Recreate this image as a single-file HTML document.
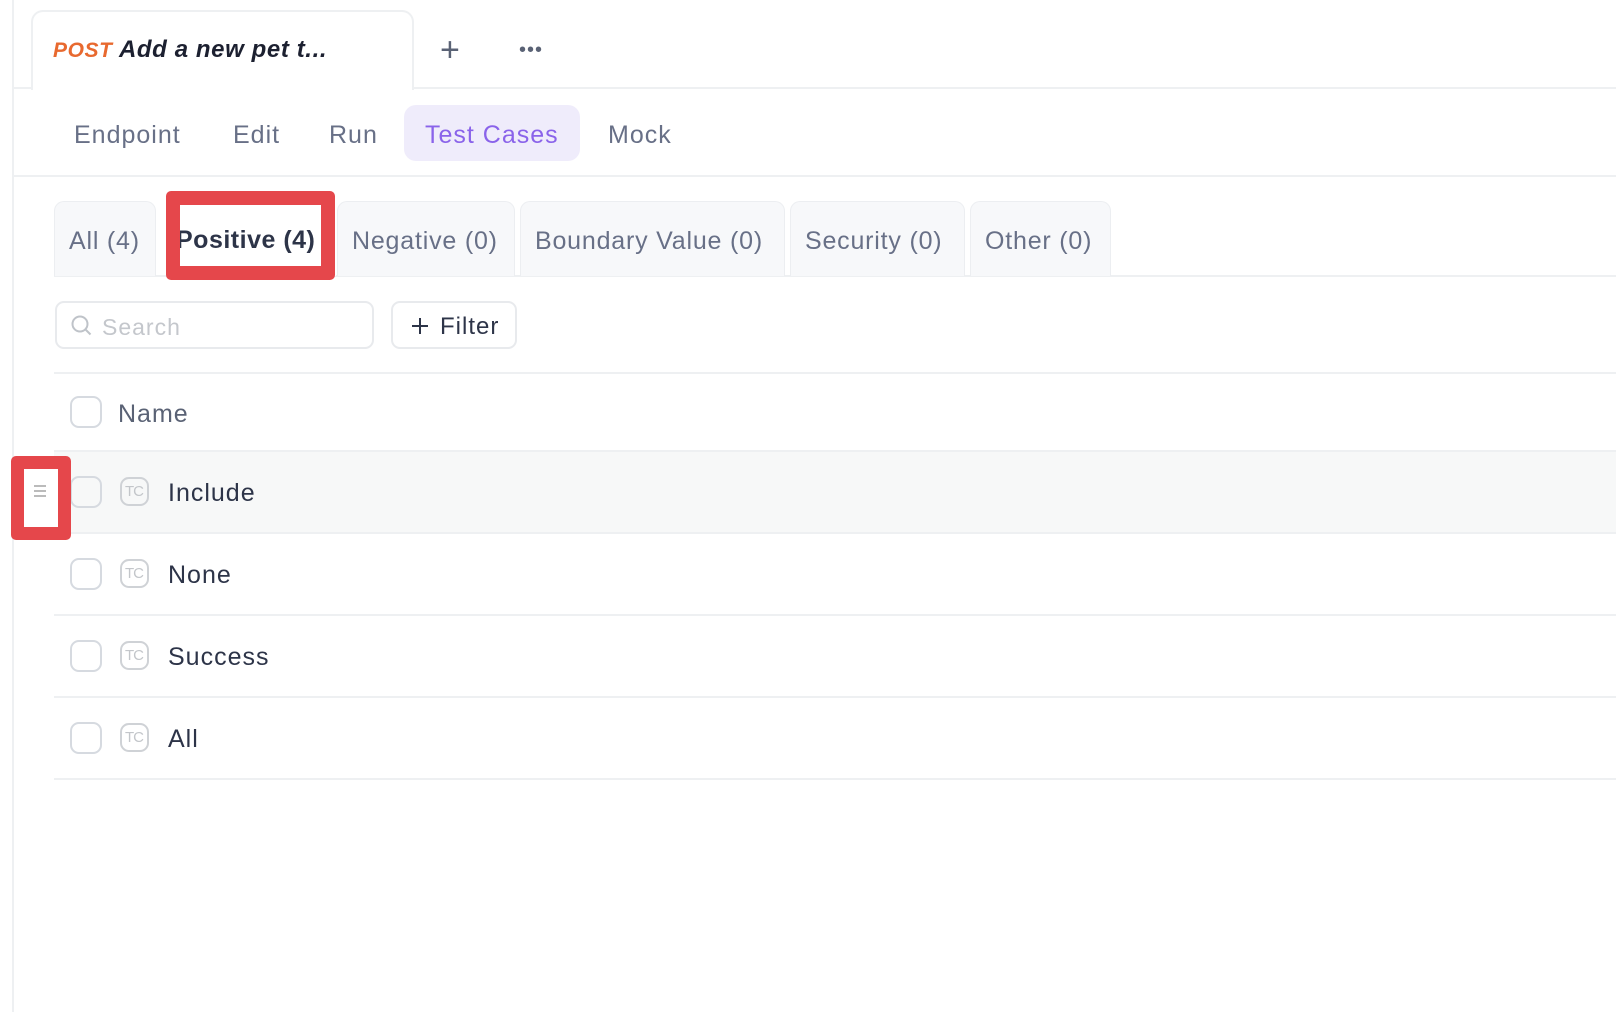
<!DOCTYPE html>
<html><head><style>
*{margin:0;padding:0;box-sizing:border-box}
body{width:1616px;height:1012px;background:#fff;font-family:"Liberation Sans",sans-serif;position:relative;overflow:hidden;color:#2d3448}
.a{position:absolute}
.vl{left:12px;top:0;width:2px;height:1012px;background:#eef0f2}
.hl{height:2px;background:#eef0f2;right:0}
.nav{font-size:25px;color:#687087;top:121px;letter-spacing:1px}
.ct{top:201px;height:75px;background:#f7f8fa;border:1px solid #eceef1;border-bottom:none;border-radius:10px 10px 0 0;font-size:25px;color:#687087;line-height:78px;padding-left:14px;letter-spacing:0.8px;white-space:nowrap}
.cb{width:32px;height:32px;border:2px solid #d6dae0;border-radius:9px;left:70px}
.tc{left:120px;width:29px;height:29px;border:2.5px solid #cfd2d6;border-radius:9px;font-size:15px;color:#c3c6ca;text-align:center;line-height:25px;letter-spacing:-1px;padding-right:1px}
.rt{left:168px;font-size:25px;color:#2d3448;letter-spacing:1px}
</style></head><body>
<div class="a vl"></div>
<div class="a" style="left:31px;top:10px;width:383px;height:80px;border:2px solid #eef0f2;border-bottom:none;border-radius:12px 12px 0 0;background:#fff;z-index:2"></div>
<div class="a hl" style="left:13px;top:87px"></div>
<div class="a" style="left:53px;top:36px;font-size:24px;font-style:italic;font-weight:bold;z-index:3;white-space:nowrap;letter-spacing:0.6px"><span style="color:#e8692f;font-size:21px">POST</span> <span style="color:#1c2030">Add a new pet t...</span></div>
<div class="a" style="left:440px;top:31px;font-size:34px;color:#5a6275;font-weight:300">+</div>
<div class="a" style="left:519px;top:39px;font-size:20px;color:#5a6275;letter-spacing:1px">•••</div>
<div class="a nav" style="left:74px">Endpoint</div>
<div class="a nav" style="left:233px">Edit</div>
<div class="a nav" style="left:329px">Run</div>
<div class="a" style="left:404px;top:105px;width:176px;height:56px;background:#efecfb;border-radius:12px"></div>
<div class="a nav" style="left:425px;color:#8a63ea">Test Cases</div>
<div class="a nav" style="left:608px">Mock</div>
<div class="a hl" style="left:13px;top:175px"></div>
<div class="a hl" style="left:54px;top:275px"></div>
<div class="a ct" style="left:54px;width:102px">All (4)</div>
<div class="a ct" style="left:166px;width:170px;background:#fff;border:none;font-weight:bold;color:#2d3448;padding-left:10px;letter-spacing:0.5px">Positive (4)</div>
<div class="a" style="left:166px;top:191px;width:169px;height:89px;border:14px solid #e5474b;border-radius:5px"></div>
<div class="a ct" style="left:337px;width:178px">Negative (0)</div>
<div class="a ct" style="left:520px;width:265px">Boundary Value (0)</div>
<div class="a ct" style="left:790px;width:175px">Security (0)</div>
<div class="a ct" style="left:970px;width:141px">Other (0)</div>
<div class="a" style="left:55px;top:301px;width:319px;height:48px;border:2px solid #e8eaed;border-radius:9px"></div>
<svg class="a" style="left:70px;top:314px" width="24" height="24" viewBox="0 0 24 24" fill="none" stroke="#bfc3c9" stroke-width="2"><circle cx="10" cy="10" r="7.5"/><path d="M15.5 15.5l5 5"/></svg>
<div class="a" style="left:102px;top:314px;font-size:23px;color:#c4c7cc;letter-spacing:1px">Search</div>
<div class="a" style="left:391px;top:301px;width:126px;height:48px;border:2px solid #e8eaed;border-radius:9px"></div>
<svg class="a" style="left:411px;top:317px" width="18" height="18" viewBox="0 0 18 18" stroke="#2d3448" stroke-width="2"><path d="M9 1v16M1 9h16"/></svg>
<div class="a" style="left:440px;top:313px;font-size:24px;color:#2d3448;letter-spacing:1px">Filter</div>
<div class="a hl" style="left:54px;top:372px"></div>
<div class="a cb" style="top:396px"></div>
<div class="a" style="left:118px;top:400px;font-size:25px;color:#5a6275;letter-spacing:1px">Name</div>
<div class="a" style="left:54px;top:450px;right:0;height:83px;background:#f7f8f8;border-top:2px solid #eef0f2"></div>
<div class="a hl" style="left:54px;top:532px"></div>
<div class="a hl" style="left:54px;top:614px"></div>
<div class="a hl" style="left:54px;top:696px"></div>
<div class="a hl" style="left:54px;top:778px"></div>
<div class="a cb" style="top:476px"></div><div class="a tc" style="top:477px">TC</div><div class="a rt" style="top:479px">Include</div>
<div class="a cb" style="top:558px"></div><div class="a tc" style="top:559px">TC</div><div class="a rt" style="top:561px">None</div>
<div class="a cb" style="top:640px"></div><div class="a tc" style="top:641px">TC</div><div class="a rt" style="top:643px">Success</div>
<div class="a cb" style="top:722px"></div><div class="a tc" style="top:723px">TC</div><div class="a rt" style="top:725px">All</div>
<div class="a" style="left:11px;top:456px;width:60px;height:84px;border:13px solid #e5474b;border-radius:5px;background:#fff"></div>
<div class="a" style="left:34px;top:485px;width:12px;height:2px;background:#bbb;box-shadow:0 5px 0 #bbb,0 10px 0 #bbb"></div>
</body></html>
